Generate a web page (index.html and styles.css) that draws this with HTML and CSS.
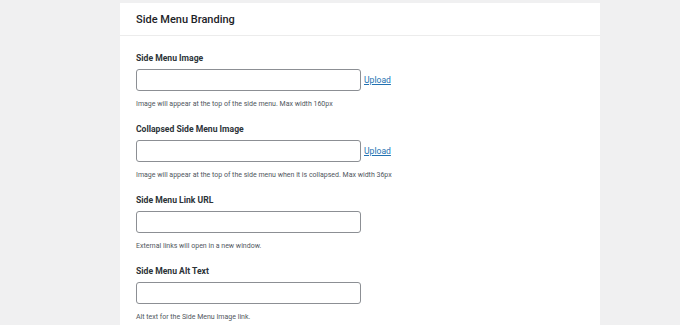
FILE: index.html
```html
<!DOCTYPE html>
<html>
<head>
<meta charset="utf-8">
<link rel="stylesheet" href="styles.css">
</head>
<body>
<div class="panel">
  <div class="panel-head"><h2 class="title">Side Menu Branding</h2></div>
  <div class="panel-body">
    <div class="field">
      <div class="label">Side Menu Image</div>
      <div class="row"><div class="input"></div><a class="upload" href="#">Upload</a></div>
      <div class="help">Image will appear at the top of the side menu. Max width 160px</div>
    </div>
    <div class="field">
      <div class="label">Collapsed Side Menu Image</div>
      <div class="row"><div class="input"></div><a class="upload" href="#">Upload</a></div>
      <div class="help">Image will appear at the top of the side menu when it is collapsed. Max width 36px</div>
    </div>
    <div class="field">
      <div class="label">Side Menu Link URL</div>
      <div class="row"><div class="input"></div></div>
      <div class="help">External links will open in a new window.</div>
    </div>
    <div class="field">
      <div class="label">Side Menu Alt Text</div>
      <div class="row"><div class="input"></div></div>
      <div class="help">Alt text for the Side Menu Image link.</div>
    </div>
  </div>
</div>
</body>
</html>
```
FILE: styles.css
```css
html, body { margin: 0; padding: 0; }
body {
  background: #f0f0f1;
  font-family: Roboto, "Noto Sans", sans-serif;
  color: #1d2327;
  height: 325px;
  overflow: hidden;
}
.panel {
  width: 480px;
  height: 322px;
  margin: 3px 0 0 120px;
  background: #fff;
}
.panel-head {
  height: 32px;
  border-bottom: 1px solid #ececec;
  padding-left: 16px;
  display: flex;
  align-items: center;
}
.title {
  margin: 0;
  font-size: 11px;
  font-weight: 500;
  color: #1d2327;
  padding-top: 1px;
}
.panel-body {
  padding: 15px 16px 0 16px;
}
.field {
  height: 71px;
}
.label {
  font-size: 8.6px;
  font-weight: 700;
  height: 18px;
  line-height: 14px;
  color: #2c3338;
}
.row {
  display: flex;
  align-items: center;
  height: 22px;
}
.input {
  width: 223px;
  height: 20px;
  border: 1px solid #8c8f94;
  border-radius: 3px;
}
.upload {
  margin-left: 3px;
  font-size: 8.6px;
  color: #2271b1;
  text-decoration: underline;
}
.help {
  margin-top: 8px;
  font-size: 7px;
  line-height: 10px;
  color: #50575e;
}
```
